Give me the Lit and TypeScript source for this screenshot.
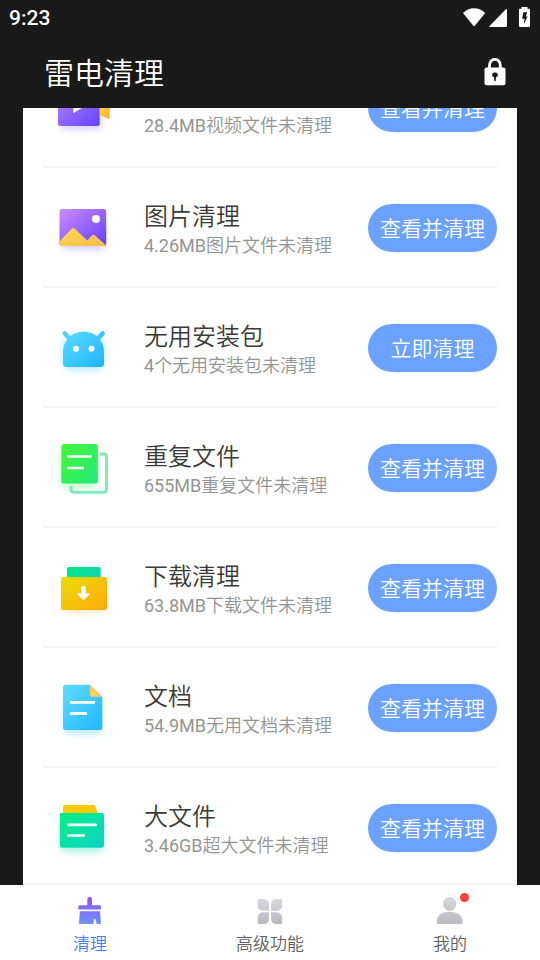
import { LitElement, html, css, svg, SVGTemplateResult } from "lit";
import { customElement, state } from "lit/decorators.js";
import { classMap } from "lit/directives/class-map.js";

interface CleanItem {
  icon: SVGTemplateResult;
  title: string;
  amount: string;
  note: string;
  action: string;
}

const gradient = (id: string, from: string, to: string, steep = false) => svg`
  <linearGradient id=${id} x1="0" y1="0" x2=${steep ? "0" : "1"} y2="1">
    <stop offset="0" stop-color=${from}></stop>
    <stop offset="1" stop-color=${to}></stop>
  </linearGradient>`;

const glow = (id: string) => svg`
  <filter id=${id} x="-40%" y="-40%" width="180%" height="180%">
    <feGaussianBlur stdDeviation="3"></feGaussianBlur>
  </filter>`;

const videoIcon = svg`
  <defs>${gradient("v1", "#b685fb", "#6443fa")}${gradient("v2", "#ffd65c", "#ffb41f")}${glow("vg")}</defs>
  <rect x="12" y="30" width="42" height="28" rx="6" fill="#7a5cff" opacity=".25" filter="url(#vg)"></rect>
  <path d="M52 28.500L60 23.500Q61.700 23 61.700 25V45.500Q61.700 47.200 60 46.700L52 43.200Z" fill="url(#v2)"></path>
  <rect x="10" y="17" width="41.700" height="37" rx="2.500" fill="url(#v1)"></rect>
  <path d="M25.300 27V41.300L37 34Z" fill="#fff"></path>`;

const imageIcon = svg`
  <defs>${gradient("i1", "#cf8bfb", "#6040fb")}${gradient("i2", "#ffd857", "#f6bb4c")}${glow("ig")}</defs>
  <rect x="14" y="28" width="43" height="30" rx="6" fill="#7a5cff" opacity=".28" filter="url(#ig)"></rect>
  <rect x="11.500" y="17" width="46.700" height="37" rx="2.500" fill="url(#i1)"></rect>
  <circle cx="48" cy="27" r="4" fill="#fff"></circle>
  <path d="M11.500 49.500L23.600 36.800Q25.300 35 27 36.800L39.300 48.500L44 43.300Q45.300 42.200 47 43.400L58 53.200Q57.400 54 56 54H14Q11.500 54 11.500 51.500Z" fill="url(#i2)"></path>`;

const packageIcon = svg`
  <defs>${gradient("a1", "#5cdcff", "#1fb4ff")}${glow("ag")}</defs>
  <rect x="14" y="24" width="43" height="35" rx="12" fill="#3cc4ff" opacity=".32" filter="url(#ag)"></rect>
  <path d="M16.800 21.500L22 27" stroke="#50d4ff" stroke-width="4.500" stroke-linecap="round"></path>
  <path d="M54.600 21.500L49.500 27" stroke="#38c6ff" stroke-width="4.500" stroke-linecap="round"></path>
  <path d="M15 40.500C15 29 23 19.800 35.500 19.800S56 29 56 40.500V51.500Q56 55 52.500 55H18.500Q15 55 15 51.500Z" fill="url(#a1)"></path>
  <circle cx="28" cy="36.800" r="3" fill="#fff"></circle>
  <circle cx="43.400" cy="36.800" r="3" fill="#fff"></circle>`;

const duplicateIcon = svg`
  <defs>${gradient("d1", "#46f637", "#22e87a")}${gradient("d2", "#82f0a4", "#7debc2", true)}${glow("dg")}</defs>
  <rect x="12" y="16" width="38" height="40" rx="8" fill="#45ee60" opacity=".32" filter="url(#dg)"></rect>
  <path d="M52 22H55.500Q58.500 22 58.500 25V57Q58.500 60.200 55.500 60.200H26Q23 60.200 23 57.200V54" fill="none" stroke="url(#d2)" stroke-width="3"></path>
  <rect x="13.300" y="12" width="36.500" height="39.500" rx="2.500" fill="url(#d1)"></rect>
  <path d="M19 24.500H44M19 36H36" stroke="#fff" stroke-width="2.700"></path>`;

const downloadIcon = svg`
  <defs>${gradient("l1", "#eade08", "#ffa80b")}${gradient("l2", "#04e884", "#11cfc2")}${glow("lg")}</defs>
  <rect x="16" y="32" width="42" height="28" rx="6" fill="#ffb52b" opacity=".35" filter="url(#lg)"></rect>
  <rect x="19" y="15" width="33.700" height="20" rx="2" fill="url(#l2)"></rect>
  <rect x="13" y="25" width="46" height="33" rx="2" fill="url(#l1)"></rect>
  <path d="M33.300 41.200V36Q33.300 33.700 35.500 33.700T37.700 36V41.200H41Q42.500 41.400 41.500 42.600L36.400 47.600Q35.500 48.400 34.600 47.600L29.600 42.600Q28.600 41.400 30 41.200Z" fill="#fff"></path>`;

const documentIcon = svg`
  <defs>${gradient("o1", "#5fdcff", "#20b8ff")}${glow("og")}</defs>
  <rect x="16" y="26" width="38" height="36" rx="6" fill="#3cc4ff" opacity=".35" filter="url(#og)"></rect>
  <path d="M17.500 12.700H42L54.300 24.700V55.500Q54.300 58 51.800 58H17.500Q15 58 15 55.500V15.200Q15 12.700 17.500 12.700Z" fill="url(#o1)"></path>
  <path d="M42 12.700L54.300 24.700H44.500Q42 24.700 42 22.200Z" fill="#ffcf5e"></path>
  <path d="M22 30.400H47M22 41.500H39" stroke="#fff" stroke-width="2.800"></path>`;

const largeIcon = svg`
  <defs>${gradient("g1", "#04ef84", "#11d2c6")}${glow("gg")}</defs>
  <rect x="12" y="26" width="44" height="35" rx="8" fill="#22e0c0" opacity=".35" filter="url(#gg)"></rect>
  <path d="M17 13H45.500Q47 13 47.500 14.500L49 19.500V24H15V15Q15 13 17 13Z" fill="#ffc900"></path>
  <path d="M12 21H54Q56 21 56 23V53.200Q56 55.700 53.500 55.700H14.500Q12 55.700 12 53.200Z" fill="url(#g1)"></path>
  <path d="M20.300 32.800H47.800M20.300 43.500H35.800" stroke="#fff" stroke-width="2.700" stroke-linecap="round"></path>`;

const ITEMS: CleanItem[] = [
  { icon: videoIcon, title: "视频清理", amount: "28.4MB", note: "视频文件未清理", action: "查看并清理" },
  { icon: imageIcon, title: "图片清理", amount: "4.26MB", note: "图片文件未清理", action: "查看并清理" },
  { icon: packageIcon, title: "无用安装包", amount: "4", note: "个无用安装包未清理", action: "立即清理" },
  { icon: duplicateIcon, title: "重复文件", amount: "655MB", note: "重复文件未清理", action: "查看并清理" },
  { icon: downloadIcon, title: "下载清理", amount: "63.8MB", note: "下载文件未清理", action: "查看并清理" },
  { icon: documentIcon, title: "文档", amount: "54.9MB", note: "无用文档未清理", action: "查看并清理" },
  { icon: largeIcon, title: "大文件", amount: "3.46GB", note: "超大文件未清理", action: "查看并清理" },
];

const TABS = [
  {
    label: "清理",
    badge: false,
    icon: svg`
      <defs>${gradient("t1", "#9150f0", "#6f93ff", true)}</defs>
      <path d="M12.300 9.200V3.300Q12.300 1 14.700 1T17 3.300V9.200H24.500Q26 9.200 26 10.700V13.500H3.300V10.700Q3.300 9.200 4.800 9.200ZM4.800 15.300H25L26 28H21.800L20.300 23.200H19L18.600 28H4Z" fill="url(#t1)"></path>`,
  },
  {
    label: "高级功能",
    badge: false,
    icon: svg`
      <defs>${gradient("t2", "#d9d8de", "#bab9c0", true)}</defs>
      <path d="M4 3H8.500Q14 3 14 8.500V14.800H9Q2.700 14.800 2.700 9V4.300Q2.700 3 4 3ZM21.700 3H26Q27.200 3 27.200 4.300V9Q27.200 14.800 21 14.800H16V8.500Q16 3 21.700 3ZM4 28H8.500Q14 28 14 22.500V16.200H9Q2.700 16.200 2.700 22V26.700Q2.700 28 4 28ZM25.700 28H21.500Q16 28 16 22.500V16.200H21Q27.200 16.200 27.200 22V26.700Q27.200 28 25.700 28Z" fill="url(#t2)"></path>`,
  },
  {
    label: "我的",
    badge: true,
    icon: svg`
      <defs>${gradient("t3", "#d9d8de", "#bab9c0", true)}</defs>
      <path d="M14.700 1A6.700 6.900 0 1 1 14.600 1ZM1.700 26.500C1.700 19 7 15.700 14.700 15.700S27.700 19 27.700 26.500Q27.700 28 26.200 28H3.200Q1.700 28 1.700 26.500Z" fill="url(#t3)"></path>`,
  },
];

@customElement("app-root")
export class AppRoot extends LitElement {
  @state() private activeTab = 0;

  static styles = css`
    :host {
      display: flex;
      flex-direction: column;
      height: 100vh;
      background: #191919;
      font-family: Roboto, "Noto Sans CJK SC", sans-serif;
      font-weight: 350;
    }
    * {
      box-sizing: border-box;
    }
    svg {
      display: block;
      flex: none;
    }
    button {
      border: 0;
      padding: 0;
      background: none;
      font: inherit;
      cursor: pointer;
    }
    .status {
      display: flex;
      align-items: center;
      justify-content: space-between;
      height: 36px;
      padding: 0 8px 0 9px;
      color: #fff;
      font-size: 21px;
      font-weight: 500;
    }
    .header {
      display: flex;
      align-items: center;
      justify-content: space-between;
      height: 72px;
      padding: 0 34px 0 44px;
      color: #fff;
    }
    .app-name {
      margin: 0;
      padding-top: 4px;
      font-size: 30px;
      font-weight: inherit;
      line-height: 44px;
    }
    .card {
      flex: 1;
      min-height: 0;
      margin: 0 23px;
      background: #fff;
      border-bottom: 2px solid #f4f4f4;
      overflow-y: auto;
      scrollbar-width: none;
    }
    .list {
      margin: 0;
      padding: 0 20px;
      list-style: none;
    }
    .row {
      display: flex;
      align-items: center;
      height: 120px;
      padding-left: 5px;
      box-shadow: inset 0 -2px #f4f4f4;
    }
    .texts {
      flex: 1;
      min-width: 0;
      margin-left: 24px;
      padding-top: 4px;
      white-space: nowrap;
    }
    .title {
      margin: 0 0 2px;
      color: #3a3a3a;
      font-size: 24px;
      font-weight: inherit;
      line-height: 30px;
    }
    .note {
      margin: 0;
      color: #949494;
      font-size: 18px;
      line-height: 24px;
    }
    .amount {
      font-weight: 400;
    }
    .action {
      width: 129px;
      height: 48px;
      padding-bottom: 2px;
      border-radius: 24px;
      background: #6ba2ff;
      color: #fff;
      font-size: 21px;
    }
    .tabs {
      display: flex;
      height: 75px;
      background: #fff;
    }
    .tab {
      flex: 1;
      display: flex;
      flex-direction: column;
      align-items: center;
      padding-top: 11px;
      gap: 6px;
      color: #5f5f64;
      font-size: 17px;
      line-height: 24px;
    }
    .tab.active {
      color: #3f7ff0;
    }
    .tab-icon {
      position: relative;
    }
    .badge {
      position: absolute;
      top: -3px;
      right: -4px;
      width: 9px;
      height: 9px;
      border-radius: 50%;
      background: #fa4238;
    }
  `;

  firstUpdated() {
    // The first entry starts half scrolled out of view.
    this.renderRoot.querySelector(".card")!.scrollTop = 60;
  }

  render() {
    return html`
      <div class="status">
        <span>9:23</span>
        <svg width="69" height="24" viewBox="0 0 69 24" fill="#fff" aria-hidden="true">
          <path d="M0 7Q4.500 2.200 11.100 2.200T22.200 7L12 19.500Q11.100 20.500 10.200 19.500Z"></path>
          <path d="M44 3.800V19.500Q44 21 42.500 21H27Q25.500 21 26.600 19.900L42.600 3.400Q44 2.200 44 3.800Z"></path>
          <path fill-rule="evenodd" d="M58.500 1H64.500V2.700H66Q67 2.700 67 3.700V20Q67 21 66 21H57Q56 21 56 20V3.700Q56 2.700 57 2.700H58.500ZM60.300 6.200L59.200 12.800H61.400L60.800 18.200L64.600 10.600H62.800L64.200 6.200Z"></path>
        </svg>
      </div>
      <header class="header">
        <h1 class="app-name">雷电清理</h1>
        <button aria-label="应用锁">
          <svg width="22" height="28" viewBox="0 0 22 28" aria-hidden="true">
            <path d="M5.500 11V7.200A5.200 5.700 0 0 1 16.300 7.200V11" fill="none" stroke="#fff" stroke-width="2.800"></path>
            <rect x=".5" y="9.500" width="21" height="17.800" rx="2" fill="#fff"></rect>
            <path d="M11 14.500A2.500 2.400 0 0 1 12 19.200L11.700 23H10.300L10 19.200A2.500 2.400 0 0 1 11 14.500Z" fill="#191919"></path>
          </svg>
        </button>
      </header>
      <main class="card">
        <ul class="list">
          ${ITEMS.map(
            (item) => html`
              <li class="row">
                <svg width="72" height="72" viewBox="0 0 72 72" aria-hidden="true">${item.icon}</svg>
                <div class="texts">
                  <h2 class="title">${item.title}</h2>
                  <p class="note"><span class="amount">${item.amount}</span>${item.note}</p>
                </div>
                <button class="action">${item.action}</button>
              </li>
            `
          )}
        </ul>
      </main>
      <nav class="tabs">
        ${TABS.map(
          (tab, i) => html`
            <button
              class=${classMap({ tab: true, active: i === this.activeTab })}
              @click=${() => (this.activeTab = i)}
            >
              <span class="tab-icon">
                <svg width="30" height="30" viewBox="0 0 30 30" aria-hidden="true">${tab.icon}</svg>
                ${tab.badge ? html`<span class="badge"></span>` : ""}
              </span>
              <span>${tab.label}</span>
            </button>
          `
        )}
      </nav>
    `;
  }
}
